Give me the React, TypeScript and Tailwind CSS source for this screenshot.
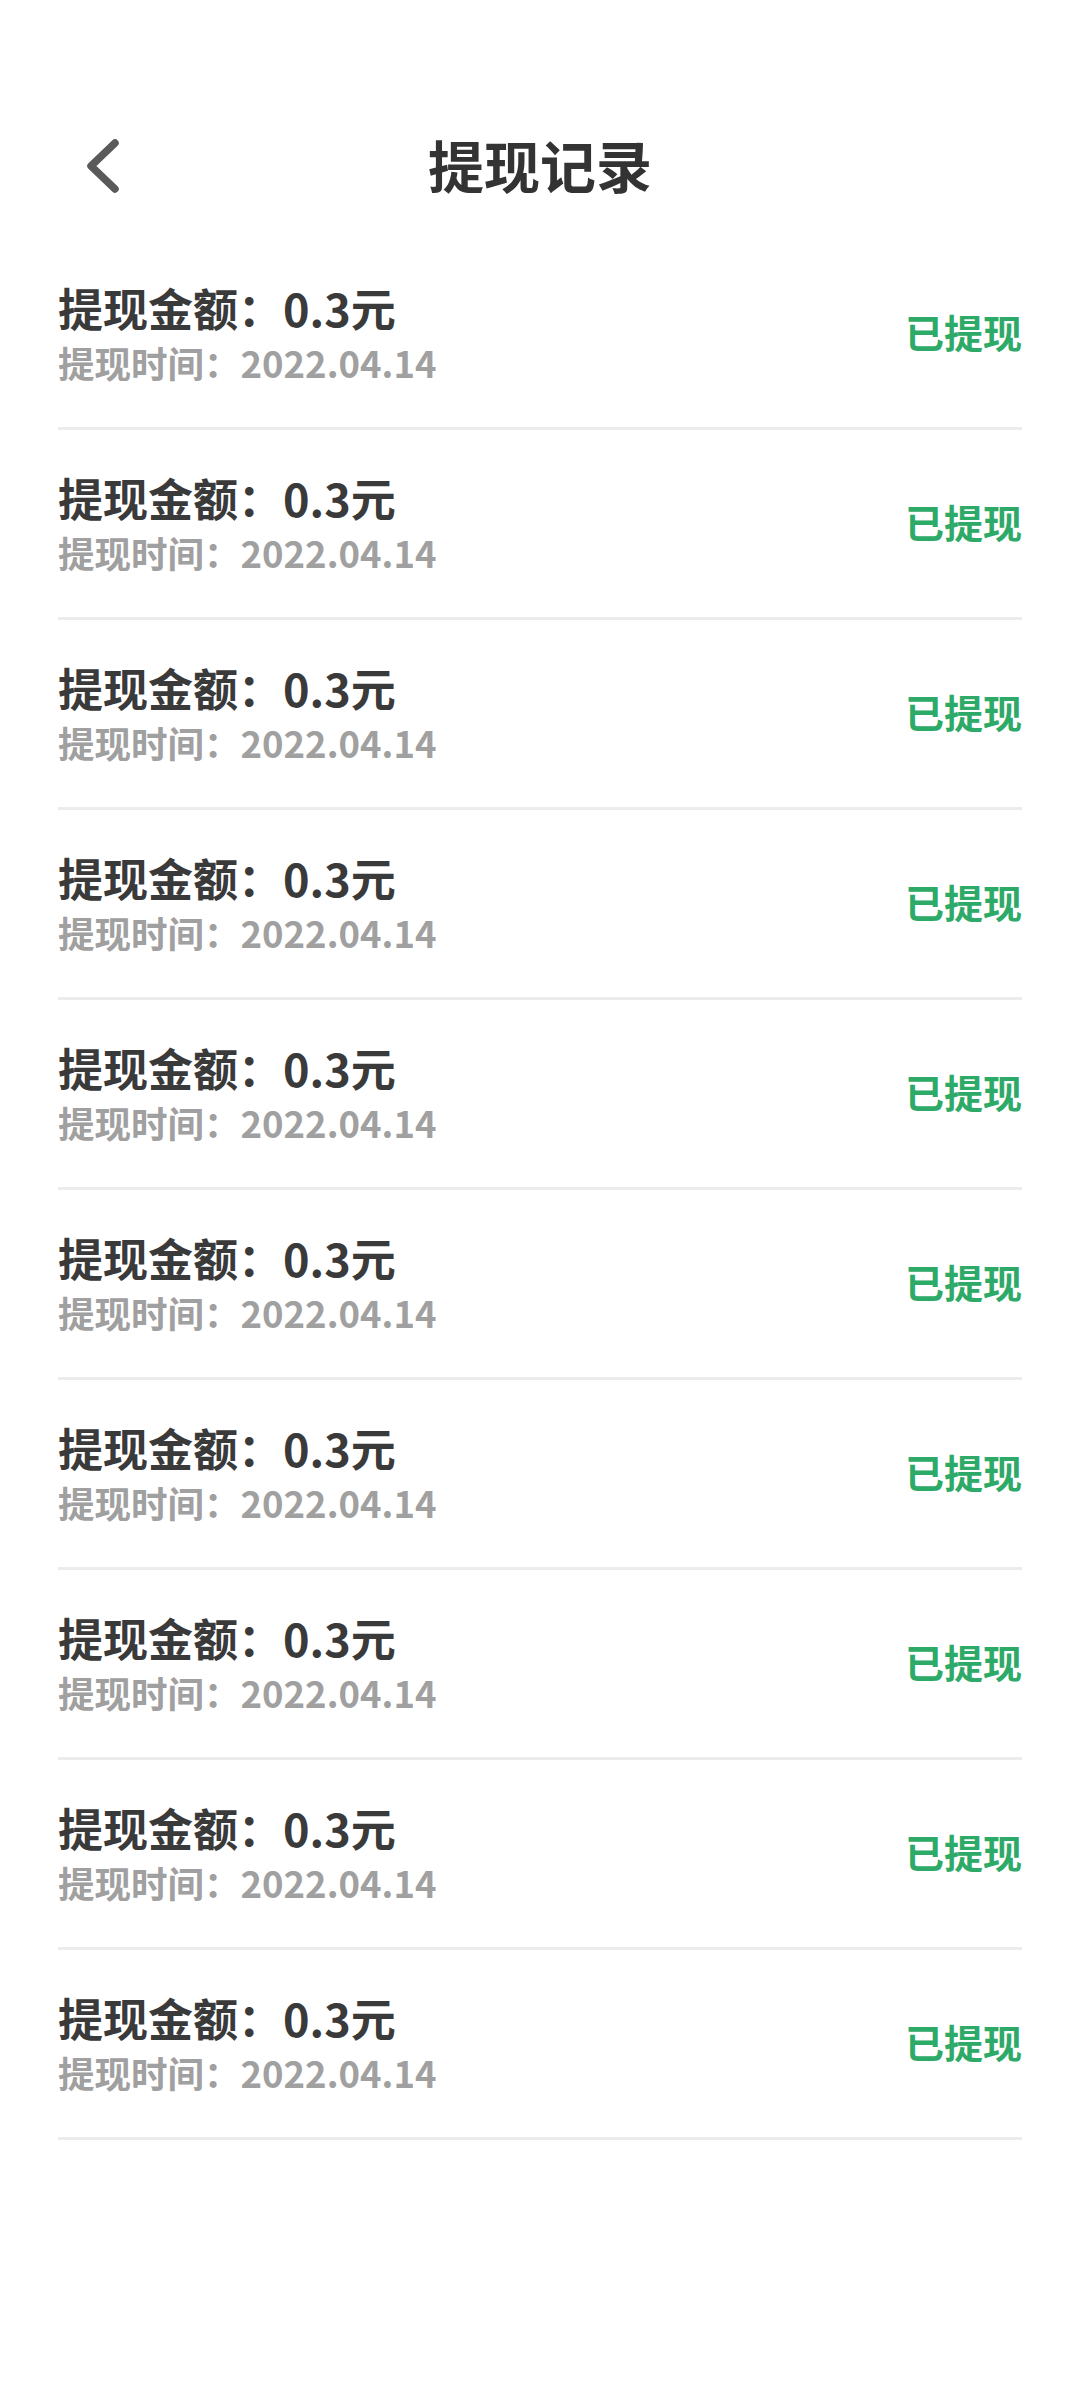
const records = Array.from({ length: 10 }, () => ({ amount: '0.3', date: '2022.04.14' }));

function BackIcon() {
  return (
    <svg width="44" height="60" viewBox="0 0 44 60" fill="none">
      <path d="M35 7 L11 30 L35 53" stroke="#5a5a5a" strokeWidth="7.5" strokeLinecap="round" strokeLinejoin="round" />
    </svg>
  );
}

export default function App() {
  return (
    <div
      className="w-[1080px] h-[2400px] overflow-hidden bg-white pt-[126px]"
      style={{ fontFamily: '"Noto Sans CJK SC", "Noto Sans", sans-serif' }}
    >
      <div className="relative flex h-[76px] items-center justify-center mb-[38px]">
        <div className="absolute left-[80px] top-[10px]">
          <BackIcon />
        </div>
        <h1 className="text-[56px] font-bold leading-none text-[#333333]">提现记录</h1>
      </div>

      <div className="px-[58px]">
        {records.map((r, i) => (
          <div
            key={i}
            className="flex items-center justify-between border-b-[3px] border-[#ececec] pt-[38px] pb-[39px]"
          >
            <div className="flex flex-col">
              <div className="h-[60px] flex items-center text-[45px] font-bold text-[#3a3a3a]">
                提现金额：{r.amount}元
              </div>
              <div className="h-[50px] flex items-center text-[36.5px] font-bold text-[#a0a0a0]">
                提现时间：{r.date}
              </div>
            </div>
            <div className="pb-[4px] text-[39px] font-bold text-[#2eaa68]">已提现</div>
          </div>
        ))}
      </div>
    </div>
  );
}
